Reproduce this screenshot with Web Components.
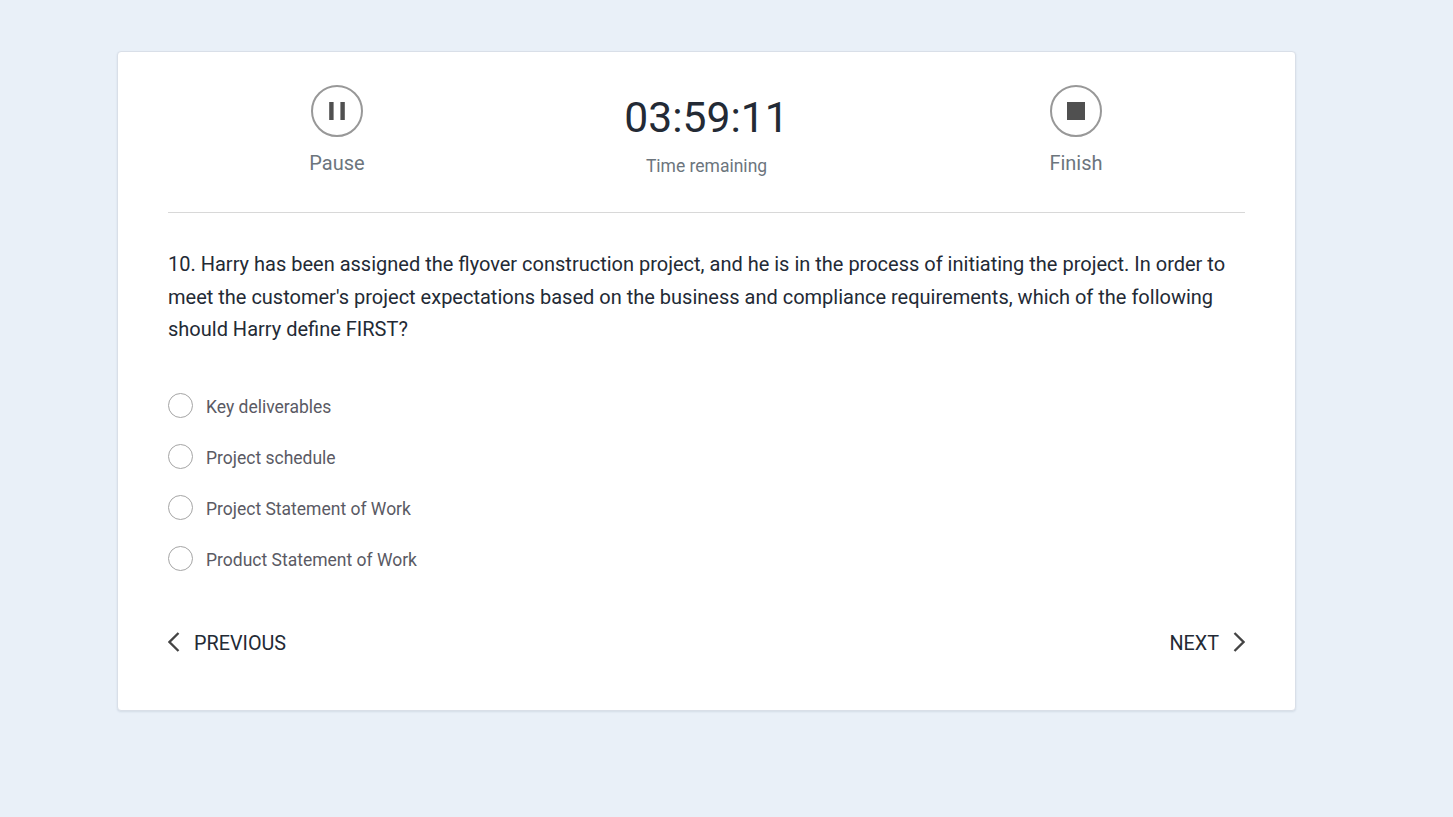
<!DOCTYPE html>
<html lang="en">
<head>
<meta charset="utf-8">
<title>Exam</title>
<style>
  html, body { margin: 0; height: 100%; }
  body {
    background: #e9f0f8;
    font-family: Roboto, "Liberation Sans", sans-serif;
    overflow: hidden;
  }
</style>
</head>
<body>
<exam-card>
  <exam-toolbar slot="toolbar" time="03:59:11"></exam-toolbar>
  <exam-question slot="question">
    10. Harry has been assigned the flyover construction project, and he is in the process of initiating the project. In order to meet the customer's project expectations based on the business and compliance requirements, which of the following should Harry define FIRST?
  </exam-question>
  <exam-option slot="options">Key deliverables</exam-option>
  <exam-option slot="options">Project schedule</exam-option>
  <exam-option slot="options">Project Statement of Work</exam-option>
  <exam-option slot="options">Product Statement of Work</exam-option>
  <exam-nav slot="nav"></exam-nav>
</exam-card>

<script>
class ExamCard extends HTMLElement {
  connectedCallback() {
    this.attachShadow({ mode: 'open' });
    this.shadowRoot.innerHTML = `
      <style>
        :host {
          display: block;
          box-sizing: border-box;
          width: 1179px;
          height: 660px;
          margin: 51px 0 0 117px;
          padding: 0 50px;
          background: #fff;
          border: 1px solid #d9dfe8;
          border-radius: 4px;
          box-shadow: 0 1px 2px rgba(60, 80, 110, .12);
        }
        .options {
          display: flex;
          flex-direction: column;
          gap: 26px;
          margin-top: 47px;
        }
      </style>
      <slot name="toolbar"></slot>
      <slot name="question"></slot>
      <div class="options"><slot name="options"></slot></div>
      <slot name="nav"></slot>
    `;
  }
}

class ExamToolbar extends HTMLElement {
  connectedCallback() {
    this.attachShadow({ mode: 'open' });
    this.shadowRoot.innerHTML = `
      <style>
        :host {
          display: grid;
          grid-template-columns: 338px 1fr 338px;
          height: 160px;
          border-bottom: 1px solid #d8d8d8;
          color: #6c757d;
        }
        .action {
          display: flex;
          flex-direction: column;
          align-items: center;
          padding-top: 33px;
        }
        svg { display: block; width: 52px; height: 52px; }
        .label { margin-top: 13px; font-size: 20px; line-height: 26px; }
        .timer { display: flex; flex-direction: column; align-items: center; padding-top: 37px; }
        .time { font-size: 42.6px; line-height: 56px; color: #232a35; }
        .hint { margin-top: 8px; font-size: 17.5px; line-height: 26px; }
      </style>
      <div class="action">
        <svg viewBox="0 0 52 52">
          <circle cx="26" cy="26" r="25" fill="none" stroke="#989898" stroke-width="2"/>
          <rect x="18.2" y="17" width="4.4" height="18" fill="#505050"/>
          <rect x="29.4" y="17" width="4.4" height="18" fill="#505050"/>
        </svg>
        <span class="label">Pause</span>
      </div>
      <div class="timer">
        <span class="time">${this.getAttribute('time')}</span>
        <span class="hint">Time remaining</span>
      </div>
      <div class="action">
        <svg viewBox="0 0 52 52">
          <circle cx="26" cy="26" r="25" fill="none" stroke="#989898" stroke-width="2"/>
          <rect x="17" y="17" width="18" height="18" fill="#505050"/>
        </svg>
        <span class="label">Finish</span>
      </div>
    `;
  }
}

class ExamQuestion extends HTMLElement {
  connectedCallback() {
    this.attachShadow({ mode: 'open' });
    this.shadowRoot.innerHTML = `
      <style>
        :host {
          display: block;
          margin-top: 35px;
          font-size: 20px;
          line-height: 32.6px;
          color: #232a35;
        }
      </style>
      <slot></slot>
    `;
  }
}

class ExamOption extends HTMLElement {
  connectedCallback() {
    this.attachShadow({ mode: 'open' });
    this.shadowRoot.innerHTML = `
      <style>
        :host {
          display: flex;
          align-items: center;
          gap: 13px;
          height: 25px;
          font-size: 17.5px;
          color: #5a5a64;
        }
        .radio {
          box-sizing: border-box;
          width: 25px;
          height: 25px;
          border: 1px solid #a5a5a5;
          border-radius: 50%;
          background: #fff;
        }
        .text { padding-top: 3px; }
      </style>
      <span class="radio"></span>
      <span class="text"><slot></slot></span>
    `;
  }
}

class ExamNav extends HTMLElement {
  connectedCallback() {
    this.attachShadow({ mode: 'open' });
    this.shadowRoot.innerHTML = `
      <style>
        :host {
          display: flex;
          justify-content: space-between;
          align-items: center;
          margin-top: 60px;
          height: 26px;
          font-size: 19.8px;
          color: #232a35;
        }
        .btn { display: flex; align-items: center; gap: 14px; }
        svg { display: block; width: 12px; height: 20px; margin-top: -3px; fill: none; stroke: #444; stroke-width: 2.3; }
      </style>
      <div class="btn">
        <svg viewBox="0 0 12 20"><path d="M10.5 1 1.5 10l9 9"/></svg>
        <span>PREVIOUS</span>
      </div>
      <div class="btn">
        <span>NEXT</span>
        <svg viewBox="0 0 12 20"><path d="M1.5 1l9 9-9 9"/></svg>
      </div>
    `;
  }
}

customElements.define('exam-card', ExamCard);
customElements.define('exam-toolbar', ExamToolbar);
customElements.define('exam-question', ExamQuestion);
customElements.define('exam-option', ExamOption);
customElements.define('exam-nav', ExamNav);
</script>
</body>
</html>
